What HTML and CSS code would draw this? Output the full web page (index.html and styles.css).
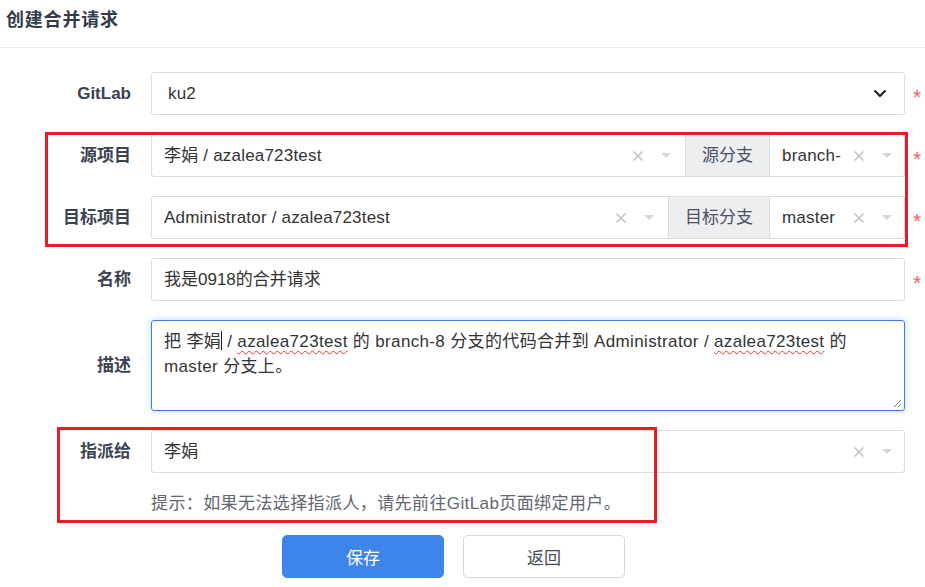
FILE: index.html
```html
<!DOCTYPE html>
<html lang="zh-CN">
<head>
    <meta charset="UTF-8">
    <meta name="viewport" content="width=device-width, initial-scale=1.0">
    <title>创建合并请求</title>
    <link rel="stylesheet" href="styles.css">
</head>
<body>
    <div class="page-head">
        <h1>创建合并请求</h1>
    </div>

    <form class="mr-form">
        <!-- GitLab 实例 -->
        <div class="row">
            <label class="row-label">GitLab</label>
            <div class="select native">
                <span class="value">ku2</span>
                <svg class="chevron" width="14" height="9" viewBox="0 0 14 9"><path d="M1.5 1.5 L7 7 L12.5 1.5" fill="none" stroke="#222" stroke-width="2.2"/></svg>
            </div>
            <span class="req">*</span>
        </div>

        <!-- 源项目 / 源分支 -->
        <div class="row">
            <label class="row-label">源项目</label>
            <div class="group">
                <div class="select grow">
                    <span class="value">李娟 / azalea723test</span>
                    <span class="icons">
                        <svg width="12" height="12" viewBox="0 0 12 12"><path d="M1.5 1.5 L10.5 10.5 M10.5 1.5 L1.5 10.5" stroke="#c4c4c4" stroke-width="1.6"/></svg>
                        <svg width="10" height="6" viewBox="0 0 10 6"><path d="M0 0 H10 L5 5 Z" fill="#d6d6d6"/></svg>
                    </span>
                </div>
                <span class="addon">源分支</span>
                <div class="select branch">
                    <span class="value clip">branch-8</span>
                    <span class="icons">
                        <svg width="12" height="12" viewBox="0 0 12 12"><path d="M1.5 1.5 L10.5 10.5 M10.5 1.5 L1.5 10.5" stroke="#c4c4c4" stroke-width="1.6"/></svg>
                        <svg width="10" height="6" viewBox="0 0 10 6"><path d="M0 0 H10 L5 5 Z" fill="#d6d6d6"/></svg>
                    </span>
                </div>
            </div>
            <span class="req">*</span>
        </div>

        <!-- 目标项目 / 目标分支 -->
        <div class="row">
            <label class="row-label">目标项目</label>
            <div class="group">
                <div class="select grow">
                    <span class="value">Administrator / azalea723test</span>
                    <span class="icons">
                        <svg width="12" height="12" viewBox="0 0 12 12"><path d="M1.5 1.5 L10.5 10.5 M10.5 1.5 L1.5 10.5" stroke="#c4c4c4" stroke-width="1.6"/></svg>
                        <svg width="10" height="6" viewBox="0 0 10 6"><path d="M0 0 H10 L5 5 Z" fill="#d6d6d6"/></svg>
                    </span>
                </div>
                <span class="addon">目标分支</span>
                <div class="select branch">
                    <span class="value clip">master</span>
                    <span class="icons">
                        <svg width="12" height="12" viewBox="0 0 12 12"><path d="M1.5 1.5 L10.5 10.5 M10.5 1.5 L1.5 10.5" stroke="#c4c4c4" stroke-width="1.6"/></svg>
                        <svg width="10" height="6" viewBox="0 0 10 6"><path d="M0 0 H10 L5 5 Z" fill="#d6d6d6"/></svg>
                    </span>
                </div>
            </div>
            <span class="req">*</span>
        </div>

        <!-- 名称 -->
        <div class="row">
            <label class="row-label">名称</label>
            <div class="text-input">我是0918的合并请求</div>
            <span class="req">*</span>
        </div>

        <!-- 描述 -->
        <div class="row row-tall">
            <label class="row-label">描述</label>
            <div class="textarea">把 李娟<span class="caret"></span> / <span class="typo">azalea723test</span> 的 branch-8 分支的代码合并到 Administrator / <span class="typo">azalea723test</span> 的 master 分支上。<svg class="grip" width="10" height="10" viewBox="0 0 10 10"><path d="M9 2 L2 9 M9 6 L6 9" stroke="#777" stroke-width="1"/></svg></div>
        </div>

        <!-- 指派给 -->
        <div class="row">
            <label class="row-label">指派给</label>
            <div class="select">
                <span class="value">李娟</span>
                <span class="icons">
                    <svg width="12" height="12" viewBox="0 0 12 12"><path d="M1.5 1.5 L10.5 10.5 M10.5 1.5 L1.5 10.5" stroke="#c4c4c4" stroke-width="1.6"/></svg>
                    <svg width="10" height="6" viewBox="0 0 10 6"><path d="M0 0 H10 L5 5 Z" fill="#d6d6d6"/></svg>
                </span>
            </div>
        </div>
        <p class="hint">提示：如果无法选择指派人，请先前往GitLab页面绑定用户。</p>

        <div class="actions">
            <button type="button" class="btn btn-primary">保存</button>
            <button type="button" class="btn">返回</button>
        </div>
    </form>

    <!-- 标注框 -->
    <div class="mark mark-project"></div>
    <div class="mark mark-assignee"></div>
</body>
</html>
```

FILE: styles.css
```css
body {
    font-family: 'Liberation Sans', 'Noto Sans CJK SC', sans-serif;
    margin: 0;
    padding: 0;
    background-color: #fff;
    color: #333;
    font-size: 17px;
    line-height: 22px;
    position: relative;
}
.page-head {
    height: 48px;
    box-sizing: border-box;
    padding: 7px 6px 0;
    border-bottom: 1px solid #ebebeb;
}
.page-head h1 {
    margin: 0;
    font-size: 18px;
    line-height: 26px;
    letter-spacing: 0.8px;
    font-weight: bold;
    color: #353b48;
}
.mr-form {
    padding-top: 24px;
}
.row {
    display: grid;
    grid-template-columns: 151px 754px 1fr;
    align-items: center;
    height: 43px;
    margin-bottom: 19px;
}
.row-tall {
    height: 91px;
}
.row-label {
    text-align: right;
    padding-right: 20px;
    font-weight: bold;
    color: #3b4252;
}
.req {
    color: #f25f5f;
    font-size: 21px;
    padding-left: 8px;
    align-self: start;
    margin-top: 14px;
}
.select, .text-input, .textarea {
    box-sizing: border-box;
    height: 43px;
    border: 1px solid #dcdcdc;
    border-radius: 3px;
    background: #fff;
    display: flex;
    align-items: center;
    padding: 0 12px;
    color: #333;
}
.select .value {
    flex: 1;
    white-space: nowrap;
    overflow: hidden;
    letter-spacing: 0.2px;
}
.select .icons {
    display: flex;
    align-items: center;
    gap: 17px;
    margin-left: 8px;
}
.select.native {
    padding-left: 16px;
}
.chevron {
    margin-right: 5px;
}
.group {
    display: flex;
    height: 43px;
}
.group .select.grow {
    flex: 1;
    border-radius: 3px 0 0 3px;
    padding-right: 14px;
}
.group .select.branch {
    width: 135px;
    border-radius: 0 3px 3px 0;
    border-left: none;
    padding-right: 12px;
}
.group .select.branch .value {
    flex: none;
    width: 59px;
}
.group .select.branch .icons {
    margin-left: auto;
}
.addon {
    box-sizing: border-box;
    height: 43px;
    padding: 0 16px;
    display: flex;
    align-items: center;
    background: #eceef0;
    border: 1px solid #dcdcdc;
    color: #4a5263;
    margin-left: -1px;
}
.textarea {
    height: 91px;
    display: block;
    position: relative;
    padding: 8px 12px;
    line-height: 25px;
    letter-spacing: 0.35px;
    border-color: #3a7ee9;
    box-shadow: 0 0 6px rgba(64, 140, 245, 0.35);
}
.caret {
    display: inline-block;
    width: 1px;
    height: 19px;
    background: #222;
    vertical-align: -3px;
}
.typo {
    text-decoration: underline wavy #e33;
    text-decoration-thickness: 1px;
    text-underline-offset: 3px;
}
.grip {
    position: absolute;
    right: 2px;
    bottom: 2px;
}
.hint {
    margin: 19px 0 0 151px;
    line-height: 24px;
    letter-spacing: 0.4px;
    color: #62666f;
}
.actions {
    display: flex;
    gap: 19px;
    padding-left: 282px;
    margin-top: 19px;
}
.btn {
    width: 162px;
    height: 43px;
    border-radius: 5px;
    border: 1px solid #d4d8de;
    background: #fff;
    color: #434a56;
    font-family: inherit;
    font-size: 17px;
    cursor: pointer;
}
.btn-primary {
    background-color: #3d84eb;
    border-color: #3d84eb;
    color: #fff;
}
.mark {
    position: absolute;
    border: 3px solid #e81c24;
    box-sizing: border-box;
    pointer-events: none;
}
.mark-project {
    left: 45px;
    top: 132px;
    width: 863px;
    height: 115px;
}
.mark-assignee {
    left: 57px;
    top: 427px;
    width: 600px;
    height: 96px;
}
```
